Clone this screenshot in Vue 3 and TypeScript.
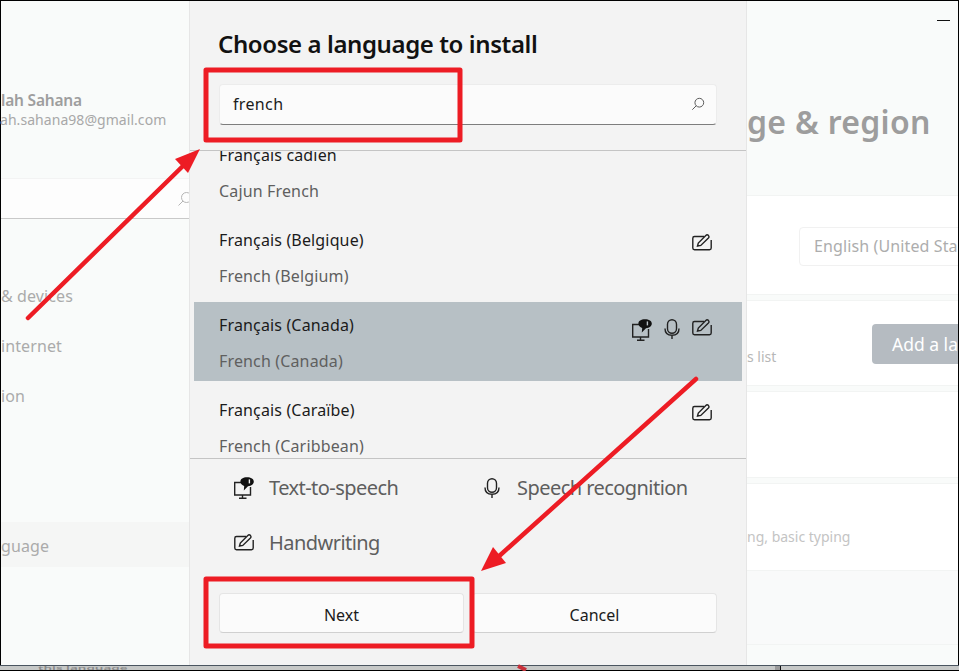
<template>
  <div class="screen">
    <!-- settings window behind the dialog -->
    <div class="window">
      <aside class="sidebar">
        <div class="user">
          <div class="user-name">lah Sahana</div>
          <div class="user-mail">ah.sahana98@gmail.com</div>
        </div>
        <div class="find">
          <svg class="find-icon" viewBox="0 0 16 16"><circle cx="9.5" cy="6.5" r="5" /><path d="M6 10L1.5 14.5" /></svg>
        </div>
        <nav class="nav">
          <div v-for="item in navItems" :key="item" class="nav-item">{{ item }}</div>
          <div class="nav-item nav-active">guage</div>
        </nav>
      </aside>
      <main class="content">
        <div class="top-bar"><span class="minimize"></span></div>
        <h1 class="heading">ge &amp; region</h1>
        <section class="card card-lang">
          <div class="select">English (United Sta</div>
        </section>
        <section class="card card-add">
          <span class="hint">s list</span>
          <div class="add-btn">Add a lan</div>
        </section>
        <section class="card card-empty"></section>
        <section class="card card-typing">
          <span class="hint-soft">ng, basic typing</span>
        </section>
        <section class="card-grey"></section>
      </main>
    </div>
    <div class="taskbar">
      <span class="taskbar-text">this language</span>
      <span class="taskbar-tick"></span>
    </div>

    <!-- language dialog -->
    <div class="dialog">
      <h2 class="title">Choose a language to install</h2>
      <div class="search">
        <span class="search-text">french</span>
        <svg class="search-icon" viewBox="0 0 16 16"><circle cx="9.5" cy="6.5" r="5" /><path d="M6 10L1.5 14.5" /></svg>
      </div>
      <div class="list">
        <div
          v-for="lang in languages"
          :key="lang.sub"
          class="row"
          :class="{ selected: lang.selected }"
        >
          <div class="row-text">
            <div class="row-name">{{ lang.name }}</div>
            <div class="row-sub">{{ lang.sub }}</div>
          </div>
          <div class="row-icons">
            <svg v-if="lang.tts" class="ic ic-tts" viewBox="0 0 20 22">
              <path d="M8 5.5H0.7V18H16.5V10" />
              <path d="M8.5 18V21M5 21.3H12.5" />
              <path class="solid" d="M13 0.2C9 0.2 6.4 2 6.4 4.6C6.4 6.8 8 8.3 10.2 8.9L9.8 13.6L14 9.2C17.6 9 19.8 7.2 19.8 4.6C19.8 2 17 0.2 13 0.2Z" />
              <path class="cut" d="M15.4 2.4V6.4" />
            </svg>
            <svg v-if="lang.mic" class="ic ic-mic" viewBox="0 0 20 20">
              <rect x="5.5" y="0.7" width="9" height="13.6" rx="4.5" />
              <path d="M3 9.5C3 13.8 5.8 16.3 10 16.3C14.2 16.3 17 13.8 17 9.5M10 16.3V20" />
            </svg>
            <svg v-if="!lang.noEdit" class="ic ic-edit" viewBox="0 0 20 17">
              <path d="M12 2.5H2.5C1.4 2.5 0.8 3.1 0.8 4.2V14C0.8 15.1 1.4 15.7 2.5 15.7H17.5C18.6 15.7 19.2 15.1 19.2 14V6" />
              <path d="M5.5 12L6.3 9L13.8 1.5C14.6 0.7 15.6 0.7 16.4 1.4C17.1 2.2 17.1 3.2 16.4 4L8.8 11.4Z" />
            </svg>
          </div>
        </div>
      </div>
      <div class="features">
        <div class="feature">
          <svg class="ic ic-tts" viewBox="0 0 20 22">
            <path d="M8 5.5H0.7V18H16.5V10" />
            <path d="M8.5 18V21M5 21.3H12.5" />
            <path class="solid" d="M13 0.2C9 0.2 6.4 2 6.4 4.6C6.4 6.8 8 8.3 10.2 8.9L9.8 13.6L14 9.2C17.6 9 19.8 7.2 19.8 4.6C19.8 2 17 0.2 13 0.2Z" />
            <path class="cut" d="M15.4 2.4V6.4" />
          </svg>
          <span>Text-to-speech</span>
        </div>
        <div class="feature">
          <svg class="ic ic-mic" viewBox="0 0 20 20">
            <rect x="5.5" y="0.7" width="9" height="13.6" rx="4.5" />
            <path d="M3 9.5C3 13.8 5.8 16.3 10 16.3C14.2 16.3 17 13.8 17 9.5M10 16.3V20" />
          </svg>
          <span>Speech recognition</span>
        </div>
        <div class="feature">
          <svg class="ic ic-edit" viewBox="0 0 20 17">
            <path d="M12 2.5H2.5C1.4 2.5 0.8 3.1 0.8 4.2V14C0.8 15.1 1.4 15.7 2.5 15.7H17.5C18.6 15.7 19.2 15.1 19.2 14V6" />
            <path d="M5.5 12L6.3 9L13.8 1.5C14.6 0.7 15.6 0.7 16.4 1.4C17.1 2.2 17.1 3.2 16.4 4L8.8 11.4Z" />
          </svg>
          <span>Handwriting</span>
        </div>
      </div>
      <div class="buttons">
        <div class="btn">Next</div>
        <div class="btn">Cancel</div>
      </div>
    </div>

    <!-- red annotations drawn over the screenshot -->
    <svg class="marks" viewBox="0 0 959 671">
      <rect class="box" x="206" y="70" width="254" height="70" />
      <rect class="box" x="206" y="579" width="266" height="67" />
      <path class="line" d="M28 318L186 163" />
      <path class="head" d="M200 149L175 159L188 173Z" />
      <path class="line" d="M696 379L497 558" />
      <path class="head" d="M481 571L493 547L506 563Z" />
      <path class="line-thin" d="M518 666L526 670" />
    </svg>
  </div>
</template>

<script setup lang="ts">
interface Language {
  name: string
  sub: string
  tts?: boolean
  mic?: boolean
  selected?: boolean
  noEdit?: boolean
}

const navItems: string[] = ['& devices', 'internet', 'ion']

const languages: Language[] = [
  { name: 'Français cadien', sub: 'Cajun French', noEdit: true },
  { name: 'Français (Belgique)', sub: 'French (Belgium)' },
  { name: 'Français (Canada)', sub: 'French (Canada)', tts: true, mic: true, selected: true },
  { name: 'Français (Caraïbe)', sub: 'French (Caribbean)' },
]
</script>

<style>
html,
body {
  margin: 0;
  background: #000;
}
</style>

<style scoped>
.screen {
  position: relative;
  width: 959px;
  height: 671px;
  overflow: hidden;
  background: #000;
  font-family: "Noto Sans", "Open Sans", sans-serif;
}

.window {
  display: flex;
  height: 664px;
  margin: 1px 1px 0 1px;
  background: #f9fbfa;
}

.sidebar {
  width: 188px;
  flex: none;
}

.user {
  padding-top: 89px;
  height: 88px;
}

.user-name {
  font-size: 15.5px;
  font-weight: 600;
  line-height: 20px;
  color: #9e9e9e;
  letter-spacing: -0.2px;
}

.user-mail {
  font-size: 14px;
  line-height: 20px;
  color: #a8a8a8;
  margin-left: -1px;
  letter-spacing: 0.05px;
}

.find {
  height: 39px;
  background: #fdfdfd;
  border-top: 1px solid #f3f3f3;
  border-bottom: 1px solid #c9c9c9;
  display: flex;
  justify-content: flex-end;
  align-items: center;
  overflow: hidden;
}

.find-icon {
  width: 16px;
  height: 16px;
  margin-right: -4px;
  fill: none;
  stroke: #b5b5b5;
  stroke-width: 1;
}

.nav {
  display: flex;
  flex-direction: column;
  padding-top: 52px;
}

.nav-item {
  height: 50px;
  font-size: 16px;
  line-height: 50px;
  color: #ababab;
  letter-spacing: 0.1px;
}

.nav-active {
  height: 45px;
  line-height: 48px;
  margin-top: 101px;
  background: #f5f6f5;
}

.content {
  flex: 1;
  min-width: 0;
  overflow: hidden;
  padding-left: 558px;
}

.top-bar {
  height: 39px;
  position: relative;
}

.minimize {
  position: absolute;
  top: 19px;
  right: 8px;
  width: 13px;
  height: 1px;
  background: #111;
}

.heading {
  margin: 0;
  height: 155px;
  font-size: 32px;
  font-weight: 600;
  line-height: 164px;
  color: #9d9d9d;
  letter-spacing: 0.3px;
  white-space: nowrap;
}

.card {
  background: #fff;
  border-top: 1px solid #f2f4f3;
  border-bottom: 1px solid #f2f4f3;
  box-sizing: border-box;
  white-space: nowrap;
}

.card-lang {
  height: 100px;
  padding: 31px 0 0 52px;
}

.select {
  width: 220px;
  height: 39px;
  box-sizing: border-box;
  border: 1px solid #f1f1f1;
  border-radius: 4px;
  padding-left: 14px;
  font-size: 16px;
  line-height: 37px;
  color: #adadad;
  letter-spacing: 0.12px;
}

.card-add {
  height: 86px;
  margin-top: 5px;
  display: flex;
  align-items: flex-start;
  justify-content: space-between;
  padding-top: 23px;
}

.hint {
  font-size: 14px;
  color: #b7b7b7;
  margin-top: 23px;
}

.add-btn {
  width: 86px;
  height: 40px;
  box-sizing: border-box;
  background: #b5bbc1;
  border-radius: 4px 0 0 4px;
  padding-left: 20px;
  font-size: 17.5px;
  line-height: 41px;
  color: #fff;
  overflow: hidden;
  white-space: nowrap;
  flex: none;
}

.card-empty {
  height: 87px;
  margin-top: 5px;
}

.card-typing {
  height: 87px;
  margin-top: 5px;
  padding-top: 41px;
  border-bottom: none;
}

.hint-soft {
  font-size: 14px;
  color: #c4c4c4;
}

.card-grey {
  height: 75px;
  background: #f9fafa;
  border-top: 1px solid #f2f4f3;
  border-bottom: 1px solid #f2f4f3;
  box-sizing: border-box;
}

.taskbar {
  display: flex;
  height: 5px;
  box-sizing: border-box;
  border-top: 1px solid #4a5560;
  background: #c6c8c7;
  overflow: hidden;
}

.taskbar-text {
  display: block;
  margin: -8px 0 0 38px;
  height: 20px;
  font-size: 13.5px;
  font-weight: 600;
  line-height: 20px;
  color: #8a8a8a;
  white-space: nowrap;
  transform: scaleY(0.35);
}

.taskbar-tick {
  margin-left: 647px;
  width: 5px;
  background: #9a9a9a;
  border-right: 1px solid #111;
}

.dialog {
  position: absolute;
  left: 189px;
  top: 1px;
  width: 558px;
  height: 664px;
  box-sizing: border-box;
  display: flex;
  flex-direction: column;
  background: #f3f3f3;
  border-left: 1px solid #e6e6e6;
  border-right: 1px solid #e6e6e6;
}

.title {
  margin: 0;
  padding: 26px 0 0 28px;
  height: 57px;
  box-sizing: border-box;
  font-size: 24px;
  font-weight: 600;
  line-height: 34px;
  color: #111;
  letter-spacing: -0.4px;
}

.search {
  height: 41px;
  margin: 26px 29px 0 29px;
  box-sizing: border-box;
  display: flex;
  align-items: center;
  justify-content: space-between;
  padding: 0 11px 2px 13px;
  background: #fbfbfb;
  border: 1px solid #ececec;
  border-bottom: 1px solid #7d7d7d;
  border-radius: 4px;
}

.search-text {
  font-size: 16px;
  color: #1c1c1c;
  letter-spacing: 0.35px;
}

.search-icon {
  width: 14px;
  height: 14px;
  fill: none;
  stroke: #555;
  stroke-width: 1.1;
}

.list {
  height: 309px;
  margin-top: 25px;
  box-sizing: border-box;
  overflow: hidden;
  border-top: 1px solid #c4c4c4;
  border-bottom: 1px solid #c4c4c4;
  padding: 0 4px;
}

.row {
  display: flex;
  justify-content: space-between;
  height: 79px;
  margin-top: 6px;
  padding: 0 30px 0 25px;
}

.row:first-child {
  margin-top: -19px;
}

.row-name {
  margin-top: 11px;
  font-size: 16px;
  line-height: 24px;
  color: #1b1b1b;
  letter-spacing: 0.15px;
}

.row-sub {
  margin-top: 12px;
  font-size: 16px;
  line-height: 24px;
  color: #5f5f5f;
  letter-spacing: 0.15px;
}

.row-icons {
  display: flex;
  gap: 10px;
  padding-top: 17px;
  align-items: flex-start;
}

.selected {
  background: #b7c0c5;
}

.ic {
  fill: none;
  stroke: #222;
  stroke-width: 1.4;
  flex: none;
}

.ic-tts {
  width: 20px;
  height: 22px;
}

.ic-mic {
  width: 20px;
  height: 20px;
}

.ic-edit {
  width: 20px;
  height: 17px;
}

.ic .solid {
  fill: #111;
  stroke: none;
}

.ic .cut {
  stroke: #f3f3f3;
  stroke-width: 1.4;
}

.selected .ic .cut {
  stroke: #b7c0c5;
}

.features {
  display: grid;
  grid-template-columns: 248px 1fr;
  grid-auto-rows: 55px;
  padding: 1px 0 0 44px;
  height: 134px;
  box-sizing: border-box;
}

.feature {
  display: flex;
  align-items: center;
  gap: 15px;
  font-size: 20px;
  color: #5e5e5e;
  letter-spacing: -0.55px;
  white-space: nowrap;
}

.buttons {
  display: flex;
  gap: 8px;
  margin: 0 29px;
}

.btn {
  flex: 1;
  height: 40px;
  box-sizing: border-box;
  background: #fbfbfb;
  border: 1px solid #e5e5e5;
  border-bottom-color: #d0d0d0;
  border-radius: 4px;
  text-align: center;
  font-size: 16px;
  line-height: 42px;
  color: #1b1b1b;
}

.marks {
  position: absolute;
  inset: 0;
  width: 959px;
  height: 671px;
  pointer-events: none;
}

.box {
  fill: none;
  stroke: #ed1c24;
  stroke-width: 5;
  stroke-linejoin: round;
}

.line {
  stroke: #ed1c24;
  stroke-width: 4.5;
  stroke-linecap: round;
  fill: none;
}

.line-thin {
  stroke: #c8313a;
  stroke-width: 4;
  fill: none;
}

.head {
  fill: #ed1c24;
}
</style>
